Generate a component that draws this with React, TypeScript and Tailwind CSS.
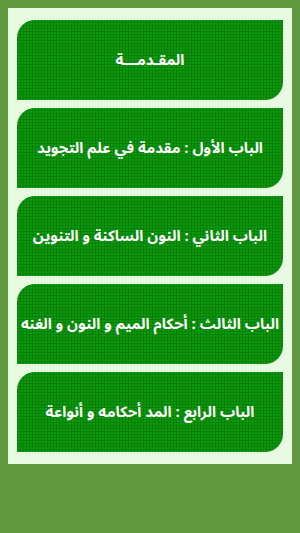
import React from "react";

const items = [
  "المقـدمـــة",
  "الباب الأول : مقدمة في علم التجويد",
  "الباب الثاني : النون الساكنة و التنوين",
  "الباب الثالث : أحكام الميم و النون و الغنه",
  "الباب الرابع : المد أحكامه و أنواعة",
];

export default function App() {
  return (
    <div className="w-[300px] h-[533px] bg-[#629a42] p-2" dir="rtl">
      <div className="bg-[#e6fbe2] flex flex-col gap-2 px-[9px] pt-3 pb-3">
        {items.map((t) => (
          <div
            key={t}
            className="h-[80px] flex items-center justify-center rounded-tl-[18px] rounded-br-[18px] bg-[#0c980c] bg-[linear-gradient(90deg,rgba(0,90,0,0.3)_1px,transparent_1px),linear-gradient(0deg,rgba(0,90,0,0.3)_1px,transparent_1px)] bg-[length:3px_3px] text-white font-bold text-[15px] [font-family:'Noto_Sans_Arabic','Noto_Naskh_Arabic','Noto_Sans',sans-serif]"
          >
            {t}
          </div>
        ))}
      </div>
    </div>
  );
}
